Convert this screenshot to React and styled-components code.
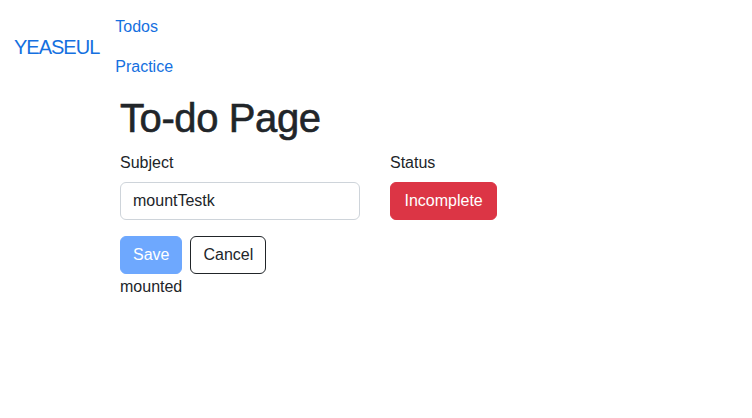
import React from "react";
import styled, { createGlobalStyle } from "styled-components";

const GlobalStyle = createGlobalStyle`
    * {
        box-sizing: border-box;
    }
    body {
        margin: 0;
        background-color: #fff;
        color: #212529;
        font-family: "Liberation Sans", "Inter", sans-serif;
        font-size: 16px;
        line-height: 1.5;
    }
`

const Page = styled.div`
    width: 752px;
    min-height: 418px;
`

// ------------------------------------------------------------------------nav
const NavBar = styled.nav`
    display: flex;
    align-items: center;
    padding: 7px 0 0 14px;
`
const Brand = styled.a`
    font-size: 20px;
    line-height: 30px;
    letter-spacing: -1px;
    color: #1570e0;
    text-decoration: none;
    margin-right: 16px;
`
const NavList = styled.ul`
    list-style: none;
    margin: 0;
    padding: 0;
    display: flex;
    flex-direction: column;
`
const NavLink = styled.a`
    display: block;
    padding: 8px 0;
    font-size: 16px;
    line-height: 24px;
    color: #1570e0;
    text-decoration: none;
`

// ------------------------------------------------------------------------content
const Content = styled.main`
    padding: 7px 0 0 120px;
`
const Title = styled.h1`
    margin: 0 0 8px;
    font-size: 40px;
    font-weight: 400;
    line-height: 48px;
    letter-spacing: -0.4px;
    -webkit-text-stroke: 0.6px #212529;
`
const FormRow = styled.div`
    display: flex;
    gap: 30px;
`
const Field = styled.div`
    display: flex;
    flex-direction: column;
    width: ${(p) => p.$width || "auto"};
`
const Label = styled.label`
    padding-top: 1px;
    margin-bottom: 7px;
    line-height: 24px;
`
const Input = styled.input`
    width: 100%;
    height: 38px;
    padding: 6px 12px;
    font: inherit;
    color: #212529;
    border: 1px solid #ced4da;
    border-radius: 6px;
    outline: none;
`
const Button = styled.button`
    height: 38px;
    padding: 6px ${(p) => p.$pad || "12px"};
    font: inherit;
    line-height: 24px;
    border-radius: 6px;
    border: 1px solid ${(p) => p.$border};
    background-color: ${(p) => p.$bg};
    color: ${(p) => p.$color};
    cursor: pointer;

    &:disabled {
        cursor: default;
    }
`
const ButtonRow = styled.div`
    display: flex;
    gap: 8px;
    margin-top: 16px;
`
const Status = styled.div`
    padding-top: 1px;
    line-height: 24px;
`

export default function App() {
    return (
        <Page>
            <GlobalStyle />
            <NavBar>
                <Brand href="#">YEASEUL</Brand>
                <NavList>
                    <li><NavLink href="#">Todos</NavLink></li>
                    <li><NavLink href="#">Practice</NavLink></li>
                </NavList>
            </NavBar>
            <Content>
                <Title>To-do Page</Title>
                <FormRow>
                    <Field $width="240px">
                        <Label>Subject</Label>
                        <Input type="text" defaultValue="mountTestk" />
                    </Field>
                    <Field>
                        <Label>Status</Label>
                        <div>
                            <Button $bg="#dc3545" $border="#dc3545" $color="#fff" $pad="13.5px">
                                Incomplete
                            </Button>
                        </div>
                    </Field>
                </FormRow>
                <ButtonRow>
                    <Button $bg="#6ea8fe" $border="#6ea8fe" $color="#fff" disabled>
                        Save
                    </Button>
                    <Button $bg="#fff" $border="#212529" $color="#212529">
                        Cancel
                    </Button>
                </ButtonRow>
                <Status>mounted</Status>
            </Content>
        </Page>
    );
}
